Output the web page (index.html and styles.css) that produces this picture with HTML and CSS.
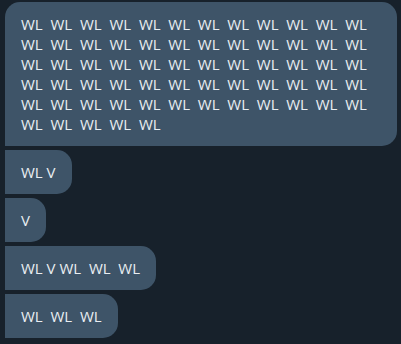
FILE: index.html
```html
<!DOCTYPE html>
<html lang="en">

<head>
    <meta charset="UTF-8">
    <meta name="viewport" content="width=device-width, initial-scale=1.0">
    <title>Chat</title>
    <link rel="stylesheet" href="styles.css">
</head>

<body>
    <div class="chat">
        <div class="bubble first">WL  WL  WL  WL  WL  WL  WL  WL  WL  WL  WL  WL  WL  WL  WL  WL  WL  WL  WL  WL  WL  WL  WL  WL  WL  WL  WL  WL  WL  WL  WL  WL  WL  WL  WL  WL  WL  WL  WL  WL  WL  WL  WL  WL  WL  WL  WL  WL  WL  WL  WL  WL  WL  WL  WL  WL  WL  WL  WL  WL  WL  WL  WL  WL  WL</div>
        <div class="bubble">WL V</div>
        <div class="bubble">V</div>
        <div class="bubble">WL V WL  WL  WL</div>
        <div class="bubble">WL  WL  WL</div>
    </div>
</body>

</html>
```

FILE: styles.css
```css
* {
    padding: 0;
    margin: 0;
    box-sizing: border-box;
}

body {
    background-color: #17212b;
    font-family: "Open Sans", "DejaVu Sans", sans-serif;
}

.chat {
    display: flex;
    flex-direction: column;
    align-items: flex-start;
    gap: 4px;
    padding: 2px 0 0 5px;
}

.bubble {
    max-width: 392px;
    padding: 12px 16px;
    background-color: #3e5468;
    color: #e9eef2;
    font-size: 15px;
    line-height: 20px;
    white-space: pre-wrap;
    border-radius: 0 15px 15px 0;
}

/* 第一条消息左上角是圆的 */
.first {
    border-top-left-radius: 15px;
}
```
